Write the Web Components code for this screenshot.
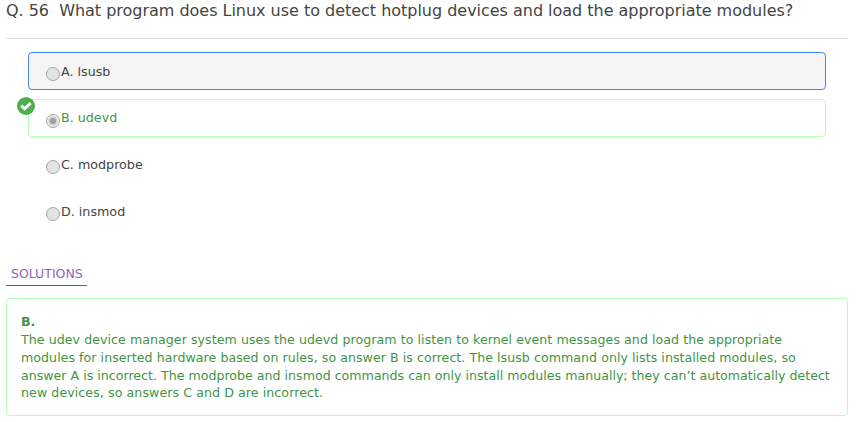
<!DOCTYPE html>
<html lang="en"><head><meta charset="utf-8"><title>Question 56</title>
<style>body{margin:0;background:#fff;font-family:"DejaVu Sans",sans-serif;color:#444}</style></head><body>
<quiz-question>
<span slot="title">Q. 56&nbsp; What program does Linux use to detect hotplug devices and load the appropriate modules?</span>
<quiz-option class="selected">A. lsusb</quiz-option>
<quiz-option class="correct">B. udevd</quiz-option>
<quiz-option class="plain">C. modprobe</quiz-option>
<quiz-option class="plain">D. insmod</quiz-option>
</quiz-question>
<quiz-solution><b slot="answer">B.</b>
<div style="letter-spacing:.058px">The udev device manager system uses the udevd program to listen to kernel event messages and load the appropriate</div>
<div style="letter-spacing:.045px">modules for inserted hardware based on rules, so answer B is correct. The lsusb command only lists installed modules, so</div>
<div style="letter-spacing:.01px">answer A is incorrect. The modprobe and insmod commands can only install modules manually; they can’t automatically detect</div>
<div style="letter-spacing:.08px;line-height:16px">new devices, so answers C and D are incorrect.</div>
</quiz-solution>
<script>
const define=(name,html)=>customElements.define(name,class extends HTMLElement{
constructor(){super();this.attachShadow({mode:'open'}).innerHTML=html}});
define('quiz-question',`<style>
:host{display:block}
header{box-sizing:border-box;height:39px;margin-left:6px;padding-top:1px;width:842px;border-bottom:1px solid #ddd;font-size:16px;line-height:19px;letter-spacing:-.02px;white-space:nowrap}
section{display:flex;flex-direction:column;gap:9px;margin:13px 36px 0 28px}
</style><header><slot name="title"></slot></header><section><slot></slot></section>`);
define('quiz-option',`<style>
:host{position:relative;display:flex;box-sizing:border-box;height:38px;border:1px solid transparent;border-radius:4px;padding:10px 0 0 16px;font-size:12.7px;line-height:17px;white-space:nowrap}
:host(.selected){background:#f5f5f5;border-color:#4285f4}
:host(.correct){border-color:#b2ffb5;color:#43964a;padding-top:9px}
:host(.correct) .radio{margin-top:4px}
:host(.plain){padding-top:9px}
.radio{flex:none;margin-top:3px;width:16px;height:16px}
.badge,.dot{display:none}
:host(.correct) .badge{display:block;position:absolute;left:-13px;top:-4px}
:host(.correct) .dot{display:block}
:host(.correct) .ring{fill:#ededed}
</style><svg class="badge" width="20" height="20" viewBox="0 0 20 20"><circle cx="10" cy="10" r="9" fill="#4caf50"/><path d="M5.3 9.7 8.5 12.8 14.7 7.2" fill="none" stroke="#fff" stroke-width="3"/></svg>
<svg class="radio" viewBox="0 0 16 16"><circle class="ring" cx="8" cy="8" r="6.5" fill="#e4e4e4" stroke="#a5a5a5"/><g class="dot"><circle cx="8" cy="8" r="4.6" fill="#cecece"/><circle cx="8" cy="8" r="3" fill="#a0a0a0"/></g></svg><span><slot></slot></span>`);
define('quiz-solution',`<style>
:host{display:block;margin:33px 14px 0 6px}
h2{box-sizing:border-box;margin:0;width:81px;height:22px;padding-left:5px;border-bottom:1px solid #e91e63;font-size:12.5px;font-weight:400;line-height:19px;color:#9560bc}
article{box-sizing:border-box;height:118px;margin-top:12px;padding:14px;border:1px solid #b2ffb5;border-radius:4px;font-size:12.6px;line-height:18px;color:#3f9446;white-space:nowrap}
</style><h2>SOLUTIONS</h2><article><slot name="answer"></slot><slot></slot></article>`);
</script></body></html>
